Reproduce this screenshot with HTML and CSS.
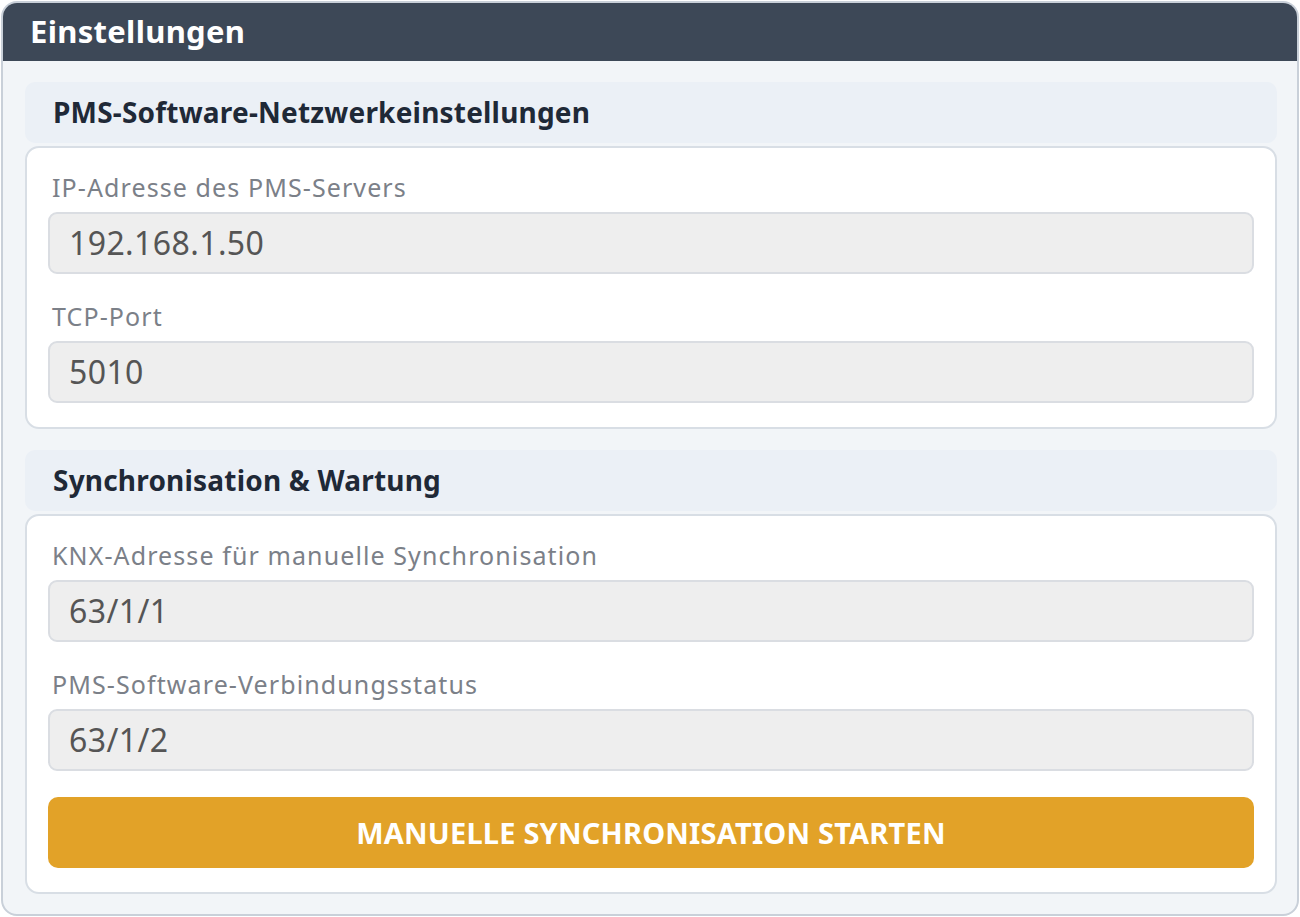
FILE: index.html
```html
<!DOCTYPE html>
<html lang="de">
<head>
<meta charset="utf-8">
<title>Einstellungen</title>
<link rel="stylesheet" href="styles.css">
</head>
<body>
<div class="card">
  <div class="card-header">Einstellungen</div>
  <div class="card-body">
    <div class="section">
      <div class="section-title">PMS-Software-Netzwerkeinstellungen</div>
      <div class="section-body">
        <label class="label">IP-Adresse des PMS-Servers</label>
        <div class="input">192.168.1.50</div>
        <label class="label">TCP-Port</label>
        <div class="input">5010</div>
      </div>
    </div>
    <div class="section">
      <div class="section-title">Synchronisation &amp; Wartung</div>
      <div class="section-body">
        <label class="label">KNX-Adresse für manuelle Synchronisation</label>
        <div class="input">63/1/1</div>
        <label class="label">PMS-Software-Verbindungsstatus</label>
        <div class="input">63/1/2</div>
        <button class="btn">MANUELLE SYNCHRONISATION STARTEN</button>
      </div>
    </div>
  </div>
</div>
</body>
</html>
```
FILE: styles.css
```css
* { box-sizing: border-box; }
html, body { margin: 0; padding: 0; background: #ffffff; }
body {
  font-family: "Noto Sans", "Open Sans", "Liberation Sans", sans-serif;
  padding: 1px 2px 0 1px;
}
.card {
  width: 1298px;
  height: 915px;
  border: 2px solid #c9d0d9;
  border-radius: 16px;
  background: #f2f5f8;
  overflow: hidden;
}
.card-header {
  height: 58px;
  background: #3d4857;
  color: #ffffff;
  font-weight: 700;
  font-size: 31px;
  line-height: 56px;
  padding-left: 27px;
  letter-spacing: 0.3px;
}
.card-body {
  padding: 21px 20px 0 22px;
  display: flex;
  flex-direction: column;
  gap: 21px;
}
.section {
  display: flex;
  flex-direction: column;
  gap: 3px;
}
.section-title {
  height: 61px;
  background: #ebf0f6;
  border-radius: 10px;
  color: #1f2937;
  font-weight: 700;
  font-size: 28px;
  line-height: 61px;
  padding-left: 28px;
  letter-spacing: 0.2px;
}
.section-body {
  background: #ffffff;
  border: 2px solid #d8dee5;
  border-radius: 14px;
  padding: 24px 21px 24px 21px;
  display: flex;
  flex-direction: column;
}
.label {
  display: block;
  color: #7b8088;
  font-size: 25px;
  line-height: 30px;
  padding-left: 4px;
  margin-bottom: 10px;
  letter-spacing: 1.1px;
}
.input {
  height: 62px;
  background: #eeeeee;
  border: 2px solid #dadde2;
  border-radius: 9px;
  color: #555555;
  font-size: 32px;
  line-height: 58px;
  padding-left: 19px;
  margin-bottom: 27px;
  letter-spacing: 0.4px;
}
.input:last-of-type { margin-bottom: 0; }
.btn {
  margin-top: 26px;
  height: 71px;
  border: none;
  border-radius: 10px;
  background: #e2a228;
  color: #ffffff;
  font-family: inherit;
  font-weight: 700;
  font-size: 29px;
  letter-spacing: 0.2px;
  line-height: 71px;
  padding: 0;
}
```
